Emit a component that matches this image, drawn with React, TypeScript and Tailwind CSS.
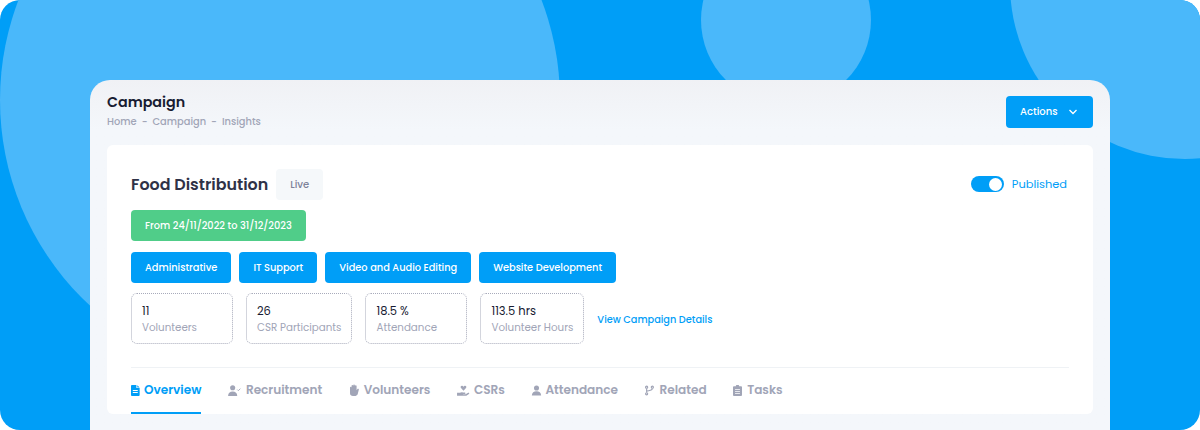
import React from "react";

const Tab = ({ icon, label, active, gap }: { icon: React.ReactNode; label: string; active?: boolean; gap: string }) => (
  <div className={`flex h-[46px] items-center border-b-2 text-[12.1px] font-semibold ${gap} ${active ? "border-[#009ef7] text-[#009ef7]" : "border-transparent text-[#a1a5b7]"}`}>
    {icon}
    <span>{label}</span>
  </div>
);

const Stat = ({ value, label }: { value: string; label: string }) => (
  <div className="flex h-[51px] min-w-[102px] flex-col justify-center rounded-[6px] border border-dotted border-[#a8abbb] px-[10px] pt-[2px]">
    <div className="text-[11.5px] leading-[17px] font-normal text-[#181c32]">{value}</div>
    <div className="text-[10.3px] leading-[16px] font-normal text-[#a1a5b7]">{label}</div>
  </div>
);

const Pill = ({ children, green }: { children: React.ReactNode; green?: boolean }) => (
  <div className={`flex h-[31px] items-center rounded-[4px] px-[14px] pt-[2px] text-[9.8px] font-medium text-white ${green ? "bg-[#50cd89]" : "bg-[#009ef7]"}`}>{children}</div>
);

const FileIcon = () => (
  <svg width="9" height="11" viewBox="0 0 10 12" fill="#009ef7"><path d="M1 0h5v3.200h3.600V11a1 1 0 0 1-1 1H1a1 1 0 0 1-1-1V1a1 1 0 0 1 1-1zm6 .2L9.600 2.600H7zM2 5.500v1h5.500v-1zm0 2.300v1h5.500v-1z" fillRule="evenodd" /></svg>
);
const RecruitIcon = () => (
  <svg width="13" height="11" viewBox="0 0 14 12" fill="#a1a5b7"><circle cx="5" cy="3" r="2.800" /><path d="M0 12c0-3.300 2-5 5-5s5 1.700 5 5z" /><path d="M10 5l1.200 1.200L13.400 4" fill="none" stroke="#a1a5b7" strokeWidth="1" /></svg>
);
const HandIcon = () => (
  <svg width="11" height="12" viewBox="0 0 11 12" fill="#a1a5b7"><path d="M1 3.400c0-1 1.300-1 1.500 0V2c0-1.200 1.600-1.200 1.700 0v-.6c0-1.100 1.700-1.100 1.700 0V2c.1-1 1.700-1 1.700 0v4.200l.7-1c.6-.9 1.900-.3 1.500.6L8.700 10.200C8 11.400 7 12 5.700 12H4C2.200 12 1 11 1 9.300z" /></svg>
);
const CsrIcon = () => (
  <svg width="13" height="12" viewBox="0 0 14 13" fill="#a1a5b7"><path d="M7 7.200 4.300 4.400C3 3 4.800 1 6.200 2.200L7 3l.8-.8C9.200 1 11 3 9.700 4.400z" /><path d="M0 9.500h3.200c.8-.8 2.200-.9 3.200-.3h2c1 0 1 1.500 0 1.500H6.500v.4h2.800l2.700-1.500c1-.4 1.700.6.900 1.300L10 12.800H0z" /></svg>
);
const UserIcon = () => (
  <svg width="11" height="11" viewBox="0 0 13 12" fill="#a1a5b7"><circle cx="6.500" cy="3" r="3" /><path d="M1 12c0-3.200 2.400-5 5.500-5S12 8.800 12 12z" /></svg>
);
const BranchIcon = () => (
  <svg width="9" height="11" viewBox="0 0 11 12" fill="none" stroke="#a1a5b7" strokeWidth="1.400"><circle cx="2" cy="2" r="1.300" /><circle cx="2" cy="10" r="1.300" /><circle cx="9" cy="2" r="1.300" /><path d="M2 3.500v5M9 3.500c0 2.500-4 2.500-7 3.500" /></svg>
);
const ClipIcon = () => (
  <svg width="9" height="11" viewBox="0 0 10 12" fill="#a1a5b7"><path d="M3.200 1.200V.8C3.200.3 3.500 0 4 0h2c.5 0 .8.300.8.800v.4H9c.6 0 1 .4 1 1V11c0 .6-.4 1-1 1H1c-.6 0-1-.4-1-1V2.200c0-.6.400-1 1-1zM2.300 4.500v1h5.400v-1zm0 2.300v1h5.400v-1zm0 2.200v1h5.400V9z" fillRule="evenodd" /></svg>
);

export default function App() {
  return (
    <div className="h-[430px] w-[1200px] overflow-hidden bg-white font-['Poppins','Inter','Noto_Sans',sans-serif]">
      <div className="relative h-[430px] w-[1200px] overflow-hidden rounded-[20px] bg-[#009ef7]">
        <div className="absolute left-0 top-[-180px] h-[560px] w-[560px] rounded-full bg-[#4ab8fa]" />
        <div className="absolute left-[701px] top-[-65px] h-[170px] w-[170px] rounded-full bg-[#4ab8fa]" />
        <div className="absolute left-[1010px] top-[-191px] h-[350px] w-[350px] rounded-full bg-[#4ab8fa]" />
        <div className="relative mx-[90px] mt-[80px] h-[350px] rounded-t-[20px] bg-gradient-to-b from-[#f0f1f5] to-[#f4f7fb] to-[50px] px-[17px]">
          <div className="flex h-[65px] items-center justify-between pb-[1px]">
            <div className="mb-[2px]">
              <div className="text-[14.3px] leading-[20px] font-semibold text-[#181c32]">Campaign</div>
              <div className="mt-[2px] flex gap-[5px] text-[9.9px] leading-[16px] font-medium text-[#a1a5b7]">
                <span>Home</span><span>-</span><span>Campaign</span><span>-</span><span>Insights</span>
              </div>
            </div>
            <div className="flex h-[32px] w-[87px] items-center gap-[10px] rounded-[4px] bg-[#009ef7] pl-[14px] text-[10px] font-medium text-white">
              <span className="pb-[2px]">Actions</span>
              <svg width="10" height="6" viewBox="0 0 10 6" fill="none" stroke="white" strokeWidth="1.300"><path d="M1.500 1 5 4.500 8.500 1" /></svg>
            </div>
          </div>
          <div className="h-[269px] rounded-[6px] bg-white px-[24px] pt-[24px]">
            <div className="flex h-[31px] items-center justify-between pr-[2px]">
              <div className="flex items-center gap-[8px]">
                <div className="text-[15.9px] font-semibold text-[#2f3247]">Food Distribution</div>
                <div className="flex h-[31px] w-[47px] items-center justify-center rounded-[4px] bg-[#f5f8fa] text-[10px] font-medium text-[#7e8299]">Live</div>
              </div>
              <div className="flex items-center gap-[8px]">
                <div className="flex h-[16px] w-[33px] items-center justify-end rounded-full bg-[#009ef7] pr-[1.5px]">
                  <div className="h-[13px] w-[13px] rounded-full bg-white" />
                </div>
                <div className="text-[11.4px] font-normal text-[#009ef7]">Published</div>
              </div>
            </div>
            <div className="mt-[10px] flex">
              <Pill green>From 24/11/2022 to 31/12/2023</Pill>
            </div>
            <div className="mt-[11px] flex gap-[8px]">
              <Pill>Administrative</Pill>
              <Pill>IT Support</Pill>
              <Pill>Video and Audio Editing</Pill>
              <Pill>Website Development</Pill>
            </div>
            <div className="mt-[10px] flex items-center gap-[13px]">
              <Stat value="11" label="Volunteers" />
              <Stat value="26" label="CSR Participants" />
              <Stat value="18.5 %" label="Attendance" />
              <Stat value="113.5 hrs" label="Volunteer Hours" />
              <div className="pt-[4px] text-[9.75px] font-medium text-[#009ef7]">View Campaign Details</div>
            </div>
            <div className="mt-[23px] flex gap-[26.5px] border-t border-[#eff2f5]">
              <Tab active gap="gap-[4px]" icon={<FileIcon />} label="Overview" />
              <Tab gap="gap-[5px]" icon={<RecruitIcon />} label="Recruitment" />
              <Tab gap="gap-[4px]" icon={<HandIcon />} label="Volunteers" />
              <Tab gap="gap-[4px]" icon={<CsrIcon />} label="CSRs" />
              <Tab gap="gap-[3px]" icon={<UserIcon />} label="Attendance" />
              <Tab gap="gap-[6px]" icon={<BranchIcon />} label="Related" />
              <Tab gap="gap-[5px]" icon={<ClipIcon />} label="Tasks" />
            </div>
          </div>
        </div>
      </div>
    </div>
  );
}
